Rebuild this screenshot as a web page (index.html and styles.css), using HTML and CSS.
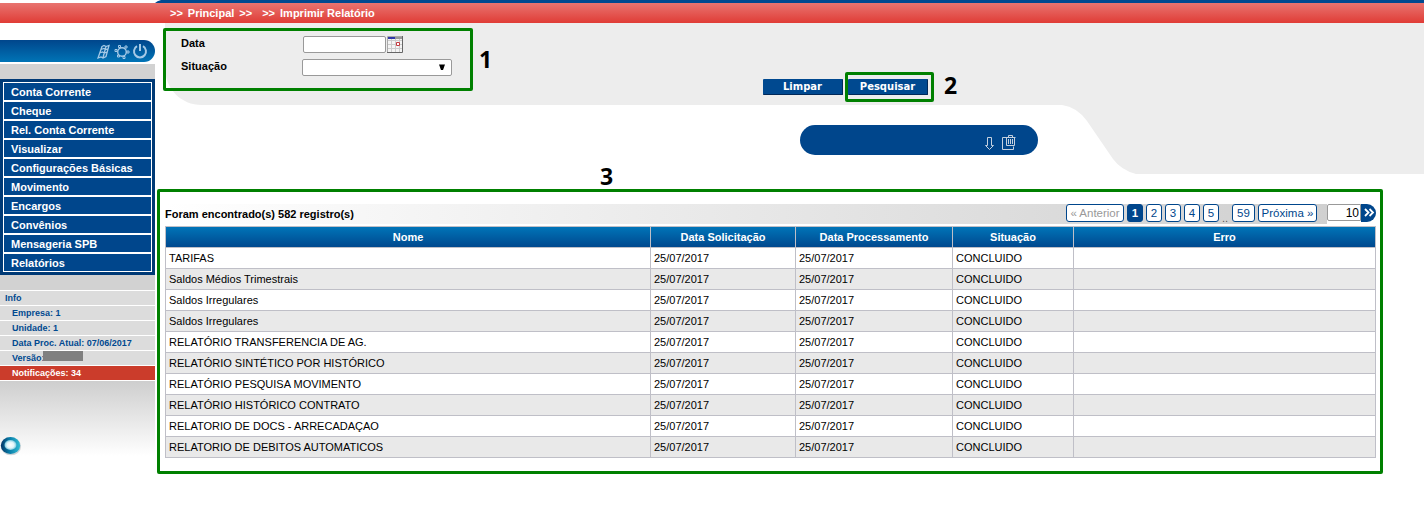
FILE: index.html
```
<!DOCTYPE html>
<html lang="pt-BR">
<head>
<meta charset="utf-8">
<title>Imprimir Relatório</title>
<link rel="stylesheet" href="styles.css">
</head>
<body>
<header class="top">
  <svg class="top-line" width="1424" height="3"><path d="M155 3Q157 1 161 0H1424V3Z" fill="#004990"/></svg>
  <nav class="crumbs"><span>&gt;&gt;</span><span class="c1">Principal</span><span class="c2">&gt;&gt;</span><span class="c3">&gt;&gt;</span><span class="c4">Imprimir Relatório</span></nav>
</header>
<div class="page">
  <aside class="side">
    <div class="tools">
      <svg width="52" height="18" viewBox="97 43 52 18" fill="none" stroke="#a4c9e6">
        <path d="M102 46.500l2-1 2 1 3-1-3 11-3 1.500-2-1-3 1zM101 49.500l3-1 2 1 2.500-1M99.500 53l3-1 2 1 2.500-1M106 46.500l-3 11" stroke-width="1.300"/>
        <circle cx="122" cy="52" r="4.300" stroke-width="1.400"/>
        <path d="M118.500 45.500h2v2h-2zM125 46h2v2h-2zM127 51h2v2h-2zM123 56.500h2v2h-2zM117.500 55h2v2h-2zM115 49.500h2v2h-2z" stroke-width="1"/>
        <path d="M137 46.200a6 6 0 1 0 6 0M140 44v7" stroke-width="2"/>
      </svg>
    </div>
    <div class="band band-top"></div>
    <ul class="menu">
      <li>Conta Corrente</li><li>Cheque</li><li>Rel. Conta Corrente</li><li>Visualizar</li><li>Configurações Básicas</li><li>Movimento</li><li>Encargos</li><li>Convênios</li><li>Mensageria SPB</li><li>Relatórios</li>
    </ul>
    <div class="band"></div>
    <ul class="info">
      <li class="info-head">Info</li><li>Empresa: 1</li><li>Unidade: 1</li><li>Data Proc. Atual: 07/06/2017</li><li>Versão:<span class="mask"></span></li><li class="alert">Notificações: 34</li>
    </ul>
    <div class="fade">
      <svg width="22" height="20" viewBox="0 0 22 20">
        <defs><linearGradient id="ring"><stop offset="0" stop-color="#063767"/><stop offset=".45" stop-color="#087da9"/><stop offset="1" stop-color="#35bdd4"/></linearGradient>
        <radialGradient id="core"><stop offset="0" stop-color="#fff"/><stop offset=".6" stop-color="#e0f5fa"/><stop offset="1" stop-color="#79c8dd"/></radialGradient></defs>
        <ellipse cx="11" cy="10.500" rx="10" ry="8.700" fill="#9ba9b1" opacity=".5"/>
        <ellipse cx="10.500" cy="9.500" rx="9.700" ry="8.500" fill="url(#ring)"/>
        <ellipse cx="10.500" cy="9" rx="6" ry="5" fill="url(#core)"/>
      </svg>
    </div>
  </aside>
  <main class="main">
    <svg class="backdrop" width="1259" height="151" viewBox="165 23 1259 151"><path fill="#ededed" d="M165 23H1424V174H1136Q1121 170 1113 159L1087 121Q1077 107 1062 105H202C181 105 165 89 165 67Z"/></svg>
    <form class="filters">
      <label>Data</label><div class="field"><input class="date" type="text">
        <svg width="16" height="17"><path fill="#f4f4f4" d="M0 0h16v17H0z"/><path fill="none" stroke="#ccc" d="M.5 4.500h15M.5 8.500h15M.5 12.500h15M4.500 3v14M8.500 3v14M12.500 3v14"/><path fill="#3038a8" d="M1 1h7v2H1z"/><path fill="#999" d="M8 1h7v2H8z"/><path fill="none" stroke="#aaa" d="M.5 16V.5H15"/><path fill="none" stroke="#666" d="M15.500 0v16.500H0"/><path fill="#fff" stroke="#c33a40" d="M9.500 6.500h3v3h-3z"/></svg></div>
      <label>Situação</label><div class="select"><svg width="8" height="7"><path d="M1 .5h6l-2 5.500h-2z"/></svg></div>
    </form>
    <div class="actions"><button>Limpar</button><button>Pesquisar</button></div>
    <div class="pill">
      <svg width="34" height="18" viewBox="984 134 34 18" fill="none" stroke="#c4d0df"><path d="M987.500 137.500h4v8h2l-4 4-4-4h2zM1006 137.500h-3.500v12h11v-3M1005.500 137.500h10M1008.500 137v-1.500h4v1.500M1006.500 138v7.500h8v-7.500M1008.500 139v5M1010.500 139v5M1012.500 139v5"/></svg>
    </div>
    <section class="results">
      <div class="bar">
        <strong>Foram encontrado(s) 582 registro(s)</strong>
        <div class="pager"><span class="off w-prev">« Anterior</span><span class="on">1</span><span>2</span><span>3</span><span>4</span><span>5</span><i>..</i><span class="w-last">59</span><span class="w-next">Próxima »</span></div>
        <div class="size"><input type="text" value="10"><b><svg width="11" height="9" fill="none" stroke="#fff" stroke-width="1.800"><path d="M1 1l3.500 3.500L1 8M5.500 1L9 4.500 5.500 8"/></svg></b></div>
      </div>
      <table>
        <colgroup><col class="k1"><col class="k2"><col class="k3"><col class="k4"><col class="k5"></colgroup>
        <thead><tr><th>Nome</th><th>Data Solicitação</th><th>Data Processamento</th><th>Situação</th><th>Erro</th></tr></thead>
        <tbody>
          <tr><td>TARIFAS</td><td>25/07/2017</td><td>25/07/2017</td><td>CONCLUIDO</td><td></td></tr>
          <tr><td>Saldos Médios Trimestrais</td><td>25/07/2017</td><td>25/07/2017</td><td>CONCLUIDO</td><td></td></tr>
          <tr><td>Saldos Irregulares</td><td>25/07/2017</td><td>25/07/2017</td><td>CONCLUIDO</td><td></td></tr>
          <tr><td>Saldos Irregulares</td><td>25/07/2017</td><td>25/07/2017</td><td>CONCLUIDO</td><td></td></tr>
          <tr><td>RELATÓRIO TRANSFERENCIA DE AG.</td><td>25/07/2017</td><td>25/07/2017</td><td>CONCLUIDO</td><td></td></tr>
          <tr><td>RELATÓRIO SINTÉTICO POR HISTÓRICO</td><td>25/07/2017</td><td>25/07/2017</td><td>CONCLUIDO</td><td></td></tr>
          <tr><td>RELATÓRIO PESQUISA MOVIMENTO</td><td>25/07/2017</td><td>25/07/2017</td><td>CONCLUIDO</td><td></td></tr>
          <tr><td>RELATÓRIO HISTÓRICO CONTRATO</td><td>25/07/2017</td><td>25/07/2017</td><td>CONCLUIDO</td><td></td></tr>
          <tr><td>RELATORIO DE DOCS - ARRECADAÇAO</td><td>25/07/2017</td><td>25/07/2017</td><td>CONCLUIDO</td><td></td></tr>
          <tr><td>RELATORIO DE DEBITOS AUTOMATICOS</td><td>25/07/2017</td><td>25/07/2017</td><td>CONCLUIDO</td><td></td></tr>
        </tbody>
      </table>
    </section>
  </main>
</div>
<div class="mark m1"></div><div class="mark m2"></div><div class="mark m3"></div>
<span class="num n1">1</span><span class="num n2">2</span><span class="num n3">3</span>
</body>
</html>
```
FILE: styles.css
```
* { box-sizing: border-box; }
body { margin: 0; width: 1424px; height: 532px; position: relative; overflow: hidden; background: #fff; font: 11px "Liberation Sans", Arial, sans-serif; color: #000; }
ul { list-style: none; margin: 0; padding: 0; }
svg { display: block; flex: none; }
.crumbs { height: 20px; padding-left: 170px; display: flex; line-height: 20px; color: #fff; font-weight: bold; background: linear-gradient(#e87470, #e03c36); }
.c1 { margin-left: 5px; }
.c2 { margin-left: 5px; }
.c3 { margin-left: 10px; }
.c4 { margin-left: 5px; }
.page { display: flex; }
.side { width: 155px; flex: none; padding-top: 17px; }
.tools { height: 22px; display: flex; justify-content: flex-end; padding: 3px 6px 0 0; border-radius: 0 11px 11px 0; background: linear-gradient(#00468c, #0074b6); }
.band { height: 15px; background: #d2d2d2; }
.band-top { margin-top: 2px; }
.menu { background: #003a76; padding: 3px; height: 196px; }
.menu li { height: 19px; border: 1px solid #fff; background: #00468c; color: #fff; font-weight: bold; line-height: 18px; padding-left: 7px; }
.info { border-top: 1px solid #fff; font-size: 9px; font-weight: bold; color: #004990; }
.info li { height: 15px; display: flex; border-bottom: 1px solid #fff; background: #dcdcdc; line-height: 14px; padding-left: 12px; }
.info .info-head { padding-left: 5px; }
.info .alert { background: #cb3c2b; color: #fff; }
.mask { width: 40px; height: 10px; margin-left: -2px; background: #808080; }
.fade { height: 75px; padding-top: 55px; background: linear-gradient(#cecece, #fff); }
.main { position: relative; width: 1269px; }
.backdrop { position: absolute; left: 10px; top: 0; z-index: -1; }
.filters { display: grid; grid-template-columns: 121px 160px; grid-template-rows: 23px 18px; padding: 13px 0 0 26px; font-weight: bold; }
.filters label { line-height: 14px; }
.field { display: flex; gap: 1px; padding-left: 1px; }
.field input { width: 83px; height: 17px; border: 1px solid #999; border-radius: 2px; padding: 0; }
.select { width: 150px; height: 17px; display: flex; justify-content: flex-end; padding: 4px 5px 0 0; border: 1px solid #999; border-radius: 2px; background: #fff; }
.actions { display: flex; gap: 5px; padding: 2px 0 0 608px; }
.actions button { width: 80px; height: 16px; border: 0; border-right: 1px solid #002858; border-bottom: 1px solid #002858; border-radius: 1px; background: #004990; color: #fff; padding: 1px 0 0; font: bold 10px/14px "DejaVu Sans", Verdana, sans-serif; }
.pill { width: 238px; height: 30px; margin: 30px 0 0 645px; padding: 9px 20px 0 0; display: flex; justify-content: flex-end; border-radius: 15px; background: #00468c; }
.results { padding: 49px 0 0 10px; width: 1221px; }
.bar { height: 20px; display: flex; background: linear-gradient(90deg, #fff, #d0d0d0) 0 0 / 1162px 20px no-repeat; margin-bottom: 2px; }
.bar strong { width: 901px; line-height: 20px; }
.pager { width: 261px; display: flex; }
.pager span { width: 16px; height: 18px; margin-right: 3px; border: 1px solid #00468c; border-radius: 3px; background: #fff; color: #00468c; font-size: 11.5px; line-height: 17px; text-align: center; white-space: nowrap; flex: none; }
.pager .w-prev { width: 58px; }
.pager .off { color: #999; }
.pager .on { background: #00468c; color: #fff; font-weight: bold; }
.pager i { width: 10px; line-height: 28px; height: 18px; font-style: normal; color: #555; }
.pager .w-last { width: 23px; }
.pager .w-next { width: 59px; }
.size { display: flex; }
.size input { width: 34px; height: 17px; border: 1px solid #999; border-radius: 2px 0 0 2px; padding: 0 1px; text-align: right; font: 12px "Liberation Sans", Arial, sans-serif; }
.size b { width: 15px; height: 18px; padding: 4px 0 0 3px; border-radius: 0 9px 9px 0; background: #00468c; }
table { width: 1211px; table-layout: fixed; border-collapse: collapse; }
.k1 { width: 485px; }
.k2 { width: 145px; }
.k3 { width: 157px; }
.k4 { width: 121px; }
.k5 { width: 302px; }
th, td { height: 21px; padding: 0 3px; border: 1px solid #bfbfc7; line-height: 20px; white-space: nowrap; }
th { color: #fff; }
thead tr { background: linear-gradient(#0074b8, #00468c); }
tbody tr:nth-child(even) { background: #e9e9e9; }
.mark { position: absolute; border: 3px solid #008000; border-radius: 2px; }
.m1 { left: 163px; top: 28px; width: 310px; height: 63px; }
.m2 { left: 845px; top: 72px; width: 89px; height: 30px; }
.m3 { left: 157px; top: 189px; width: 1226px; height: 285px; }
.num { position: absolute; font: bold 23px/28px "Open Sans", sans-serif; }
.n1 { left: 479px; top: 45px; }
.n2 { left: 944px; top: 71px; }
.n3 { left: 600px; top: 162px; }
```
